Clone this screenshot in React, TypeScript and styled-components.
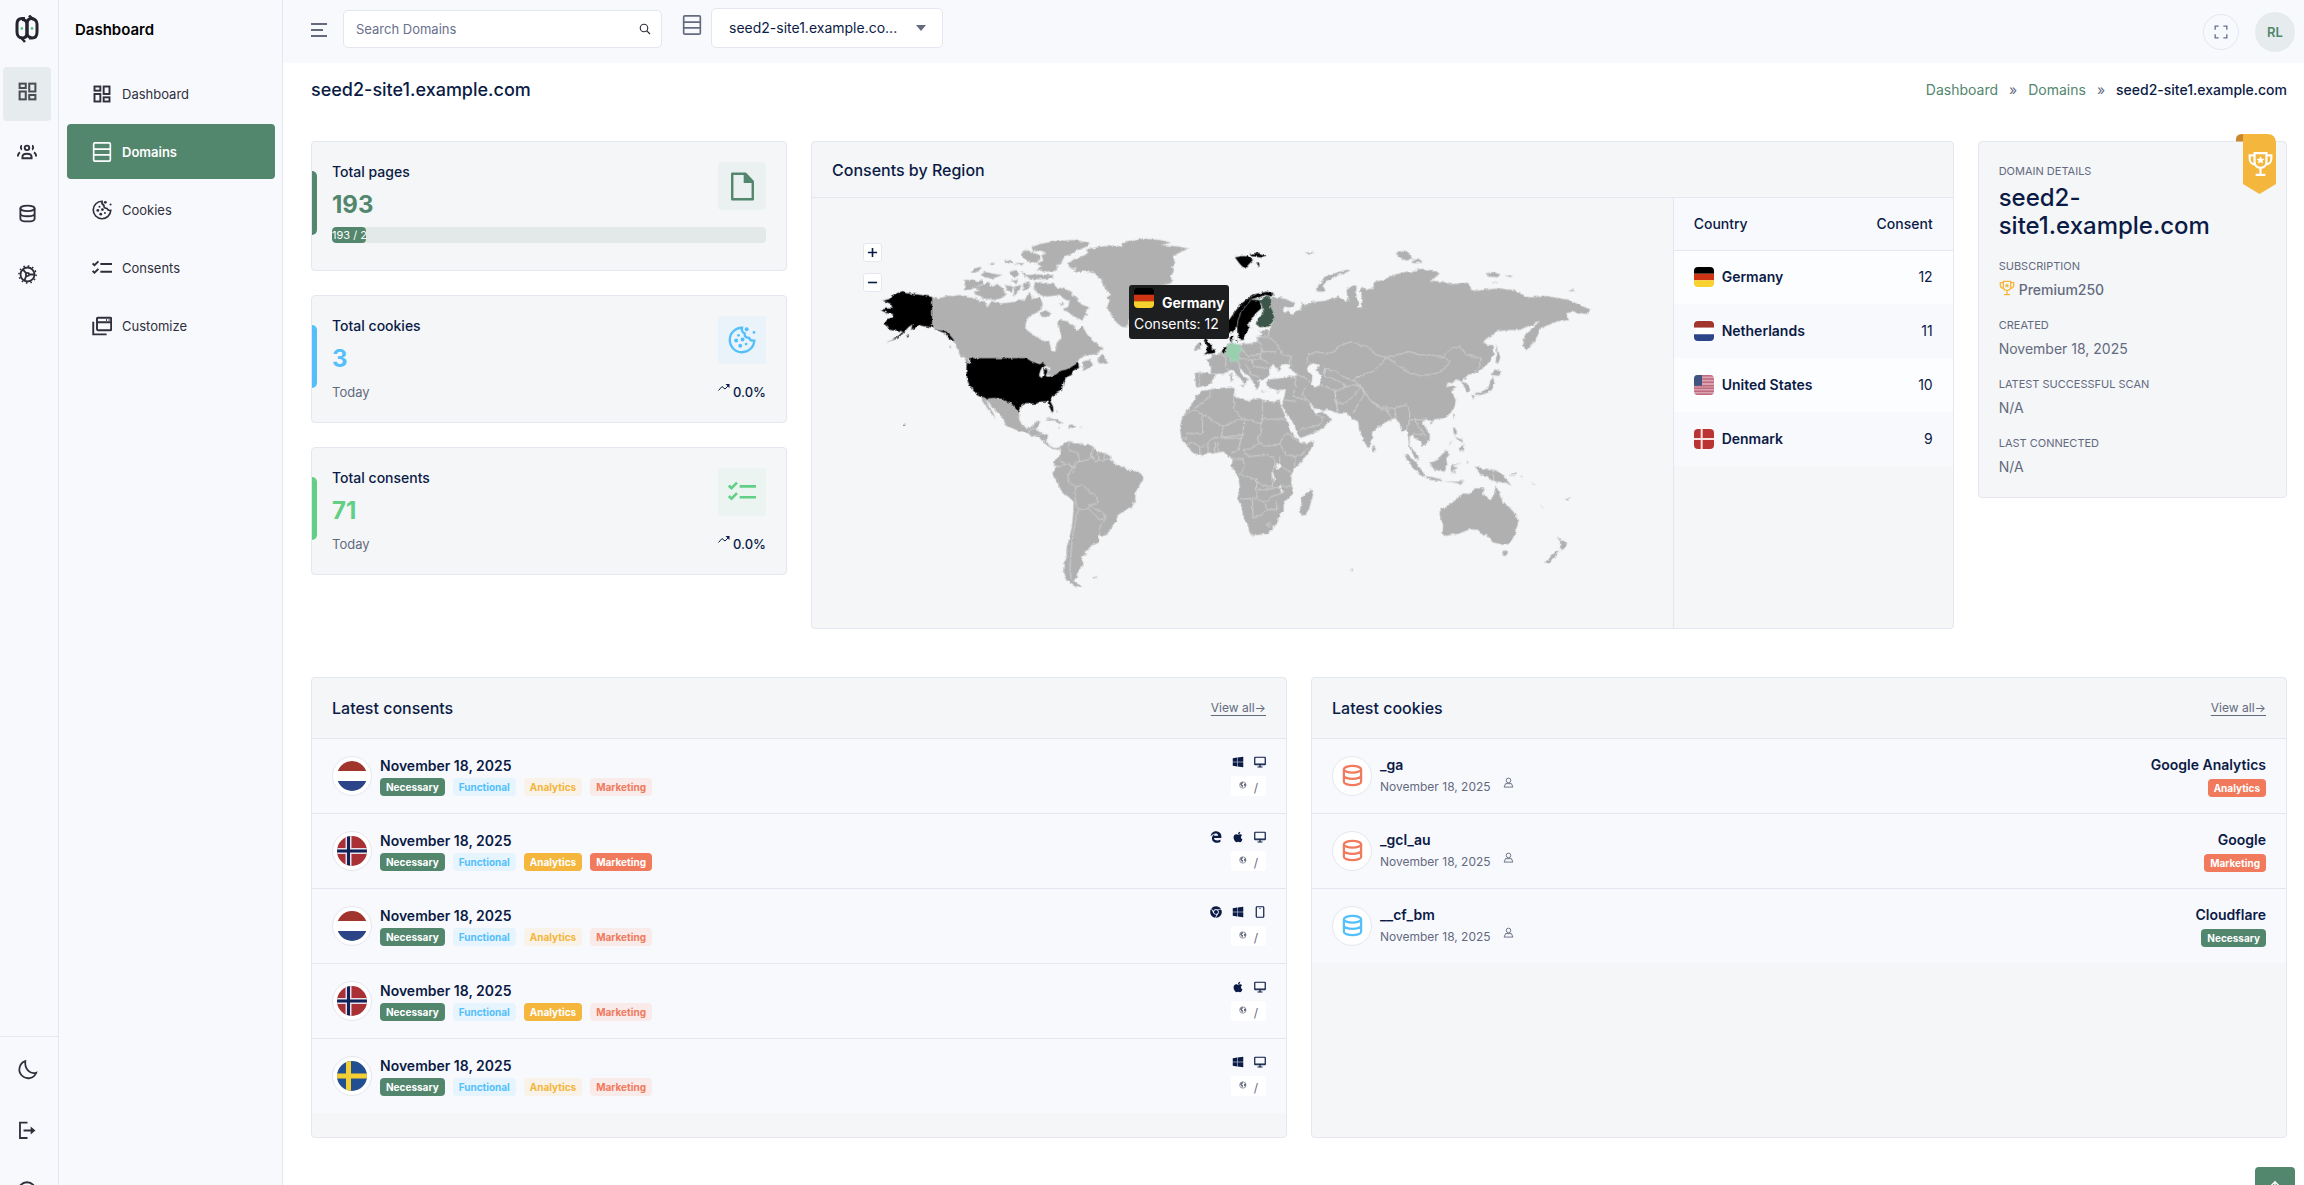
import React from "react";
import styled, { createGlobalStyle } from "styled-components";
import { FaWindows, FaApple, FaChrome } from "react-icons/fa";
import { FaEdgeLegacy } from "react-icons/fa6";

const c = {
  green: "#52866d",
  blue: "#53c0fb",
  mint: "#62cf85",
  amber: "#f4b63c",
  coral: "#f1795c",
  navy: "#0b1b45",
  muted: "#646a7e",
  ink: "#2f2f3b",
  line: "#e4e7ef",
  panel: "#f4f6f8",
  shell: "#f8f9fd",
};

const GlobalStyle = createGlobalStyle`
  *, *::before, *::after { box-sizing: border-box; }
  body { margin: 0; background: #fff; color: ${c.navy}; font-family: Inter, "Open Sans", sans-serif; font-size: 14px; line-height: 20px; }
  h1, h2, h3, p, ul, ol, dl, dd { margin: 0; padding: 0; }
  ul, ol { list-style: none; }
  svg { display: block; }
  button, input, select { font: inherit; color: inherit; }
  a { color: inherit; text-decoration: none; }
`;

/* ---------- icons ---------- */

type IconProps = { size?: number; color?: string };

const Line = ({ size = 20, color = "currentColor", w = 2.3, children }: IconProps & { w?: number; children: React.ReactNode }) => (
  <svg width={size} height={size} viewBox="0 0 24 24" fill="none" stroke={color} strokeWidth={w} aria-hidden="true">
    {children}
  </svg>
);

const GridIcon = (p: IconProps) => (
  <Line {...p}>
    <rect x="3" y="3" width="7" height="5" />
    <rect x="14" y="3" width="7" height="9" />
    <rect x="3" y="12" width="7" height="9" />
    <rect x="14" y="16" width="7" height="5" />
  </Line>
);
const RowsIcon = (p: IconProps) => (
  <Line {...p} w={2}>
    <rect x="2" y="1" width="20" height="22" rx="1.5" />
    <path d="M2 8.5h20M2 15.500h20" />
  </Line>
);
const CookieIcon = (p: IconProps) => (
  <Line {...p} w={2}>
    <path d="M12 1.500a10.500 10.500 0 1 0 10.500 11c-2 .3-3.800-.4-4.400-2.300-2.600 0-4.200-1.600-3.800-3.800-1.800-.6-2.600-2.600-2.300-4.900z" />
    <g fill="currentColor" stroke="none" color={p.color}>
      <circle cx="9" cy="8" r="1.200" /><circle cx="7" cy="12.500" r="1.700" /><circle cx="12.500" cy="11.500" r="1.700" />
      <circle cx="10.500" cy="17" r="1.700" /><circle cx="15.500" cy="15.500" r="1.200" />
      <circle cx="16" cy="2.800" r="1.700" /><circle cx="22.300" cy="5.500" r="1.200" />
    </g>
  </Line>
);
const ChecksIcon = (p: IconProps) => (
  <Line {...p}>
    <path d="M.7 6.500l2.300 2.200 4.700-4.700M.7 15.500l2.300 2.200 4.700-4.700M10 7.200h14M10 16.500h14" />
  </Line>
);
const WindowsIcon = (p: IconProps) => (
  <Line {...p}>
    <rect x="6" y="2" width="17" height="15" rx="1" />
    <path d="M6 7.500h17M1.500 7v15h16M17 4.800h1M20 4.800h1" />
  </Line>
);
const PeopleIcon = (p: IconProps) => (
  <Line {...p}>
    <circle cx="12" cy="7" r="2.700" />
    <path d="M6.500 19.500v-1.500c0-2.500 2.400-4 5.500-4s5.500 1.500 5.500 4v1.500zM1 17.500c0-2.500.8-4 2.600-5M23 17.500c0-2.500-.8-4-2.600-5M6 4.500c-1.800.2-2 3.800 0 4.500M18 4.500c1.800.2 2 3.800 0 4.500" />
  </Line>
);
const DatabaseIcon = (p: IconProps) => (
  <Line {...p}>
    <ellipse cx="12" cy="5.500" rx="9" ry="3.500" />
    <path d="M3 5.500v13c0 2 4 3.500 9 3.500s9-1.500 9-3.500v-13M3 12c0 2 4 3.500 9 3.500s9-1.500 9-3.500" />
  </Line>
);
const GearIcon = (p: IconProps) => (
  <Line {...p}>
    <circle cx="12" cy="12" r="8.800" />
    <circle cx="12" cy="12" r="10.800" strokeWidth="2" strokeDasharray="2 3.650" />
    <circle cx="12" cy="12" r="2" />
    <path d="M10.500 10.500L6 5.500M14 12h7M10.500 13.500L8 20" />
  </Line>
);
const MoonIcon = (p: IconProps) => (
  <Line {...p} w={2}>
    <path d="M9.500 2.500a10 10 0 1 0 12.500 13.200c-7 2.200-13.500-4-12.500-13.200z" />
  </Line>
);
const LogoutIcon = (p: IconProps) => (
  <Line {...p}>
    <path d="M12 2H2.500v19.500H12M7 12h10" />
    <path d="M16 7l6 5-6 5z" fill="currentColor" stroke="none" />
  </Line>
);
const AccountIcon = (p: IconProps) => (
  <Line {...p}>
    <circle cx="12" cy="12" r="10.500" /><circle cx="12" cy="9.500" r="3.500" /><path d="M5 19c3-4 11-4 14 0" />
  </Line>
);
const SearchIcon = (p: IconProps) => (
  <Line {...p}><circle cx="10" cy="10" r="7.500" /><path d="M15.500 15.500L22 22" /></Line>
);
const ExpandIcon = (p: IconProps) => (
  <Line {...p}><path d="M2 8V2h6M16 2h6v6M22 16v6h-6M8 22H2v-6" /></Line>
);
const FileIcon = (p: IconProps) => (
  <Line {...p} w={2}>
    <path d="M3.500 1.500h11L20.500 8v14.500h-17z" strokeLinejoin="round" />
    <path d="M13 1l8 8h-8z" fill={p.color} stroke="none" />
  </Line>
);
const TrophyIcon = (p: IconProps) => (
  <Line {...p} w={2}>
    <path d="M6.500 2h11v8c0 3.500-2.500 5.500-5.500 5.500S6.500 13.500 6.500 10zM6.500 4H2v3c0 3 2 5.500 5.200 5.500M17.500 4H22v3c0 3-2 5.500-5.200 5.500M12 15.500V22M7.500 22h9" />
    <path d="M12 4.800l1.200 2.300 2.500.3-1.900 1.700.5 2.500-2.300-1.300-2.300 1.300.5-2.500-1.900-1.700 2.500-.3z" fill={p.color ?? "currentColor"} stroke="none" />
  </Line>
);
const TrendIcon = (p: IconProps) => (
  <Line {...p} w={2}><path d="M1 17l7-8 6 5 8-8" /><path d="M15 4h8v8z" fill="currentColor" stroke="none" /></Line>
);
const DesktopIcon = (p: IconProps) => (
  <Line {...p} w={2.400}><rect x="1.500" y="2.500" width="21" height="15" rx="1" /><path d="M12 17v4M7 22h10M2 16h20" /></Line>
);
const PhoneIcon = (p: IconProps) => (
  <Line {...p} w={2.400}><rect x="4.500" y="1.500" width="15" height="21" rx="1.500" /><path d="M11 5h2" /></Line>
);
const GlobeIcon = (p: IconProps) => (
  <Line {...p} w={2}>
    <circle cx="12" cy="12" r="10" />
    <path d="M3 9l4-5 6-1-1 4-3 2 1 3 3 1-1 4-2 4-2-5-3-4zM16 8l5-1 1 5-2 5-3-1-2-4z" fill="currentColor" stroke="none" />
  </Line>
);
const PersonIcon = (p: IconProps) => (
  <Line {...p} w={2}><circle cx="12" cy="7.500" r="5" /><path d="M2.500 22l3-7.500h13l3 7.500z" /></Line>
);
const Logo = () => (
  <svg width="24" height="28" viewBox="0 0 24 28" fill="none" stroke="#25252d" strokeWidth="3" aria-hidden="true">
    <path d="M10 3.500H7C3.500 3.500 2 6 2 9v8c0 3.500 2 6 5.500 6s4.500-2.500 4.500-6V9c0-3.500 1.500-5.500 4.500-5.500S22 6 22 9v8c0 3.500-1.500 6-5 6h-3" />
    <path d="M7 4.500c3.500 0 5 2 5 5v8c0 3 1.500 5 4.500 5" />
    <path d="M14 .5l5 4.500M5.500 22l4.500 5" strokeWidth="2.500" />
    <circle cx="6.800" cy="13.500" r="1.400" fill="#5fc48a" stroke="none" /><circle cx="17" cy="13.500" r="1.400" fill="#5fc48a" stroke="none" />
  </svg>
);

/* ---------- flags ---------- */

type FlagCode = "de" | "nl" | "us" | "dk" | "no" | "se";
const FlagArt: Record<FlagCode, React.ReactNode> = {
  de: <><path fill="#000" d="M0 0h30v10H0z" /><path fill="#cf3512" d="M0 10h30v10H0z" /><path fill="#f8d12e" d="M0 20h30v10H0z" /></>,
  nl: <><path fill="#a1342b" d="M0 0h30v10H0z" /><path fill="#fff" d="M0 10h30v10H0z" /><path fill="#2c4589" d="M0 20h30v10H0z" /></>,
  us: <><path fill="#dba3b0" d="M0 0h30v30H0z" /><path stroke="#c06a80" strokeWidth="2.300" d="M0 1h30M0 6h30M0 11h30M0 16h30M0 20h30M0 24.500h30M0 29h30" /><path fill="#3f5480" d="M0 0h12v16H0z" /></>,
  dk: <><path fill="#b93432" d="M0 0h30v30H0z" /><path stroke="#fbe4e4" strokeWidth="3" d="M11.500 0v30M0 15h30" /></>,
  no: <><path fill="#a93034" d="M0 0h30v30H0z" /><path stroke="#e9dfe8" strokeWidth="6" d="M11.500 0v30M0 15h30" /><path stroke="#102257" strokeWidth="3" d="M11.500 0v30M0 15h30" /></>,
  se: <><path fill="#224f92" d="M0 0h30v30H0z" /><path stroke="#f3cf33" strokeWidth="5" d="M11.500 0v30M0 15h30" /></>,
};
const FlagSvg = styled.svg<{ $round?: boolean }>`
  flex: none;
  border-radius: ${(p) => (p.$round ? "50%" : "4px")};
`;
const Flag = ({ code, size = 20, round }: { code: FlagCode; size?: number; round?: boolean }) => (
  <FlagSvg $round={round} width={size} height={size} viewBox="0 0 30 30" aria-hidden="true">{FlagArt[code]}</FlagSvg>
);

/* ---------- shell ---------- */

const Shell = styled.div`
  display: grid;
  grid-template-columns: 59px 224px minmax(0, 1fr);
  height: 100vh;
  overflow: hidden;
`;
const Rail = styled.nav`
  display: flex;
  flex-direction: column;
  min-height: 0;
  background: ${c.shell};
  border-right: 1px solid ${c.line};
  color: ${c.ink};
`;
const LogoLink = styled.a`
  display: flex;
  justify-content: center;
  padding: 15px 5px 24px 0;
`;
const RailList = styled.div`
  display: flex;
  flex-direction: column;
  gap: 7px;
  padding: 0 3px;
`;
const RailButton = styled.button<{ $active?: boolean }>`
  display: flex;
  flex: none;
  align-items: center;
  justify-content: center;
  width: 48px;
  height: 54px;
  padding: 0 0 6px;
  border: 0;
  border-radius: 4px;
  color: ${(p) => (p.$active ? "#4b4b52" : "inherit")};
  background: ${(p) => (p.$active ? "#e6ecee" : "transparent")};
`;
const RailFoot = styled(RailList)`
  flex: none;
  height: 149px;
  margin-top: auto;
  padding-top: 8px;
  border-top: 1px solid ${c.line};
  overflow: hidden;
`;
const Menu = styled.nav`
  display: flex;
  flex-direction: column;
  background: ${c.shell};
  border-right: 1px solid ${c.line};
`;
const MenuTitle = styled.h2`
  padding: 20px 16px 26px;
  font-size: 15px;
  font-weight: 600;
  color: #000;
`;
const MenuList = styled.ul`
  display: grid;
  gap: 3px;
  padding: 0 7px 0 8px;
`;
const MenuLink = styled.a<{ $active?: boolean }>`
  display: flex;
  align-items: center;
  gap: 10px;
  height: 55px;
  padding: 0 25px;
  border-radius: 4px;
  color: ${(p) => (p.$active ? "#fff" : c.ink)};
  background: ${(p) => (p.$active ? c.green : "transparent")};
  font-weight: ${(p) => (p.$active ? 600 : 400)};
  font-size: 13px;
`;
const Main = styled.main`
  min-width: 0;
`;
const TopBar = styled.header`
  display: flex;
  align-items: center;
  height: 63px;
  padding: 0 9px 0 28px;
  background: ${c.shell};
`;
const Burger = styled.button`
  display: grid;
  gap: 4px;
  width: 16px;
  margin: 0 16px 4px 0;
  padding: 0;
  border: 0;
  background: none;
`;
const BurgerBar = styled.span<{ $short?: boolean }>`
  width: ${(p) => (p.$short ? "12px" : "16px")};
  height: 2px;
  background: ${c.muted};
`;
const SearchBox = styled.label`
  display: flex;
  align-items: center;
  width: 319px;
  height: 38px;
  margin: 0 20px 5px 0;
  padding: 0 10px 0 12px;
  background: #fff;
  border: 1px solid ${c.line};
  border-radius: 5px;
  color: ${c.ink};
`;
const SearchInput = styled.input`
  flex: 1;
  min-width: 0;
  padding: 0;
  border: 0;
  outline: 0;
  background: none;
  font-size: 13px;
  &::placeholder { color: #68708c; opacity: 1; }
`;
const DomainIcon = styled.span`
  margin: 0 9px 13px 0;
  color: ${c.muted};
`;
const SelectBox = styled.label`
  display: flex;
  align-items: center;
  width: 232px;
  height: 40px;
  margin-bottom: 7px;
  padding-right: 16px;
  background: #fff;
  border: 1px solid ${c.line};
  border-radius: 5px;
`;
const Select = styled.select`
  flex: 1;
  min-width: 0;
  padding: 0 0 0 17px;
  margin-right: 15px;
  border: 0;
  outline: 0;
  appearance: none;
  background: none;
  font-size: 14px;
  text-overflow: ellipsis;
`;
const Caret = styled.span`
  border: 5px solid transparent;
  border-top: 6px solid ${c.muted};
  border-bottom: 0;
`;
const RoundButton = styled.button`
  display: grid;
  place-items: center;
  width: 36px;
  height: 36px;
  margin: 0 16px 0 auto;
  padding: 0;
  border: 1px solid ${c.line};
  border-radius: 50%;
  background: none;
  color: #68708c;
`;
const Avatar = styled.button`
  width: 40px;
  height: 40px;
  padding: 0;
  border: 0;
  border-radius: 50%;
  background: #e6ecee;
  color: ${c.green};
  font-size: 13px;
  font-weight: 600;
`;

const Content = styled.div`
  padding: 15px 17px 0 28px;
`;
const PageHead = styled.div`
  display: flex;
  justify-content: space-between;
  align-items: center;
  margin-bottom: 39px;
`;
const PageTitle = styled.h1`
  font-size: 18px;
  line-height: 24px;
  font-weight: 500;
`;
const Crumbs = styled.ol`
  display: flex;
  gap: 11px;
  color: ${c.muted};
`;
const CrumbLink = styled.a`
  color: ${c.green};
`;
const CrumbHere = styled.span`
  color: ${c.navy};
  font-weight: 500;
`;
const Grid = styled.div`
  display: grid;
  grid-template-columns: repeat(12, minmax(0, 1fr));
  gap: 48px 24px;
`;
const Col = styled.div<{ $span: number }>`
  grid-column: span ${(p) => p.$span};
  display: flex;
  flex-direction: column;
  gap: 24px;
`;
const Card = styled.section`
  position: relative;
  background: ${c.panel};
  border: 1px solid ${c.line};
  border-radius: 4px;
`;

/* ---------- stat cards ---------- */

const StatCard = styled(Card)`
  padding: 20px;
`;
const Accent = styled.span<{ $color: string }>`
  position: absolute;
  left: 0;
  top: 23%;
  width: 5px;
  height: 50%;
  border-radius: 0 5px 5px 0;
  background: ${(p) => p.$color};
`;
const StatTop = styled.div`
  display: flex;
  justify-content: space-between;
  align-items: flex-start;
  height: 58px;
`;
const StatTitle = styled.h3`
  margin-bottom: 8px;
  font-size: 14px;
  font-weight: 500;
`;
const StatValue = styled.p<{ $color: string }>`
  font-size: 24px;
  line-height: 30px;
  font-weight: 700;
  color: ${(p) => p.$color};
`;
const StatIcon = styled.span<{ $bg: string; $color: string }>`
  display: grid;
  place-items: center;
  width: 48px;
  height: 48px;
  border-radius: 4px;
  background: ${(p) => p.$bg};
  color: ${(p) => p.$color};
`;
const StatFoot = styled.div`
  display: flex;
  justify-content: space-between;
  margin-top: 8px;
  font-size: 13px;
  color: ${c.muted};
`;
const Delta = styled.span`
  display: flex;
  gap: 3px;
  font-weight: 500;
  color: ${c.navy};
`;
const Track = styled.div`
  height: 16px;
  margin: 7px 0;
  border-radius: 4px;
  background: #e3e9e8;
  overflow: hidden;
`;
const Fill = styled.div`
  height: 100%;
  border-radius: 4px;
  background: ${c.green};
  color: #fff;
  font-size: 11px;
  line-height: 16px;
  white-space: nowrap;
  overflow: hidden;
`;

/* ---------- region card ---------- */

const CardHead = styled.div<{ $tall?: boolean }>`
  display: flex;
  justify-content: space-between;
  align-items: center;
  height: ${(p) => (p.$tall ? "61px" : "56px")};
  padding: 0 20px;
  border-bottom: 1px solid ${c.line};
`;
const CardTitle = styled.h2`
  font-size: 16px;
  font-weight: 500;
`;
const RegionBody = styled.div`
  display: grid;
  grid-template-columns: minmax(0, 1fr) 280px;
`;
const MapPane = styled.div`
  position: relative;
`;
const MapSvg = styled.svg`
  width: 100%;
  height: auto;
`;
const ZoomStack = styled.div`
  position: absolute;
  left: 51px;
  top: 45px;
  display: grid;
  gap: 11px;
`;
const ZoomButton = styled.button`
  display: grid;
  place-items: center;
  width: 19px;
  height: 19px;
  padding: 0;
  border: 1px solid ${c.line};
  border-radius: 3px;
  background: #fff;
  color: ${c.navy};
`;
const Tooltip = styled.div`
  position: absolute;
  left: 317px;
  top: 87px;
  width: 100px;
  height: 54px;
  padding: 3px 5px;
  border-radius: 3px;
  background: #1c1e20;
  color: #fff;
  font-size: 14px;
`;
const TooltipName = styled.div`
  display: flex;
  gap: 8px;
  height: 26px;
  font-weight: 700;
  line-height: 30px;
`;
const CountryPane = styled.div`
  border-left: 1px solid ${c.line};
`;
const CountryTable = styled.table`
  width: 100%;
  border-collapse: collapse;
`;
const Th = styled.th`
  height: 52px;
  padding: 0 20px;
  background: ${c.shell};
  border-bottom: 1px solid ${c.line};
  font-weight: 500;
  text-align: left;
  &:last-child { text-align: right; }
`;
const Td = styled.td`
  height: 54px;
  padding: 0 20px;
  &:last-child { text-align: right; }
`;
const Tr = styled.tr`
  background: #fcfdff;
  &:nth-child(even) { background: ${c.shell}; }
`;
const CountryName = styled.span`
  display: flex;
  align-items: center;
  gap: 8px;
  font-weight: 600;
`;

/* ---------- details card ---------- */

const DetailCard = styled(Card)`
  padding: 19px 20px 20px;
`;
const Ribbon = styled.svg`
  position: absolute;
  right: 10px;
  top: -8px;
`;
const DetailLabel = styled.dt`
  font-size: 11px;
  color: ${c.muted};
`;
const DetailName = styled.dd`
  max-width: 220px;
  margin: 3px 0 16px;
  font-size: 24px;
  line-height: 28px;
  font-weight: 500;
`;
const DetailValue = styled.dd<{ $strong?: boolean }>`
  display: flex;
  gap: 4px;
  margin: 4px 0 15px;
  color: ${c.muted};
  font-weight: ${(p) => (p.$strong ? 500 : 400)};
  &:last-child { margin-bottom: 0; }
`;

/* ---------- lists ---------- */

const ListCard = styled(Card)`
  flex: 1;
  padding-bottom: 24px;
`;
const ViewAll = styled.a`
  font-size: 12px;
  color: ${c.muted};
  text-decoration: underline;
  text-underline-offset: 3px;
`;
const Row = styled.li`
  display: flex;
  align-items: center;
  height: 75px;
  padding: 0 20px;
  background: ${c.shell};
  border-bottom: 1px solid ${c.line};
  &:last-child { height: 74px; border-bottom: 0; }
`;
const Disc = styled.span`
  display: grid;
  place-items: center;
  width: 40px;
  height: 40px;
  margin-right: 8px;
  border: 1px solid ${c.line};
  border-radius: 50%;
  background: #fff;
`;
const RowText = styled.div`
  display: grid;
  gap: 2px;
`;
const RowTitle = styled.p`
  font-size: 14px;
  font-weight: 600;
`;
const RowMeta = styled.p`
  display: flex;
  gap: 12px;
  font-size: 12px;
  color: ${c.muted};
`;
const RowEnd = styled.div`
  display: grid;
  justify-items: end;
  gap: 4px;
  margin-left: auto;
`;
const Badges = styled.div`
  display: flex;
  gap: 8px;
`;
const Badge = styled.span<{ $fg: string; $bg: string }>`
  padding: 0 6px;
  border-radius: 4px;
  font-size: 10px;
  line-height: 18px;
  font-weight: 700;
  color: ${(p) => p.$fg};
  background: ${(p) => p.$bg};
`;
const Devices = styled.div`
  display: flex;
  gap: 10px;
  padding-bottom: 4px;
`;
const PathTag = styled.span`
  display: flex;
  gap: 7px;
  width: 35px;
  height: 20px;
  padding: 4px 8px;
  border-radius: 3px;
  background: #fff;
  color: ${c.muted};
  font-size: 12px;
  line-height: 15px;
`;
const ToTop = styled.button`
  position: fixed;
  right: 9px;
  bottom: -22px;
  display: grid;
  place-items: center;
  width: 40px;
  height: 40px;
  padding: 0;
  border: 0;
  border-radius: 4px;
  background: ${c.green};
  color: #fff;
`;

/* ---------- world map ---------- */

const landWest = [
  "M217,231L235,237 262,227 280,228 300,225 325,232 345,234 360,240 355,246 375,243 382,262 395,243 420,250 440,249 460,246 478,238 495,243 500,226 512,215 520,236 540,232 548,250 545,268 520,283 500,300 496,325 520,345 548,362 568,366 575,392 586,395 590,370 604,352 600,330 592,308 600,300 625,304 640,318 655,332 668,318 680,340 695,360 712,370 728,388 712,402 690,406 668,410 655,420 655,428 638,440 620,448 600,452 590,462 575,466 562,465 565,452 572,448 556,436 540,430 520,425 500,414 330,414 325,425 310,412 298,400 290,385 284,365 270,345 258,333 240,328 217,320Z",
  "M665,425L690,420 700,435 680,448 668,452 672,440ZM712,425L725,400 735,412 745,428 738,432ZM295,402L308,405 328,425 318,422ZM266,374L274,378 272,388Z",
  "M316,180L340,178 350,185 365,180 372,190 352,200 335,208 318,212 312,208ZM345,203L370,193 385,185 398,200 412,192 430,205 438,225 425,235 400,240 370,235 360,228 348,225 342,215 360,212Z",
  "M332,158L345,145 362,140 365,148 345,158ZM362,165L375,155 395,160 415,163 428,165 400,175 375,172ZM450,155L470,150 478,165 465,172 450,165ZM485,152L500,165 530,163 580,165 578,175 540,178 510,176 490,168ZM388,130L402,128 398,136ZM433,118L460,126 455,132 438,128ZM462,130L490,128 485,136Z",
  "M515,82L540,72 580,64 640,60 690,68 680,80 650,92 630,105 615,108 605,128 590,140 592,152 560,155 530,150 545,140 530,130 550,122 545,108 560,100 540,92 520,95ZM485,98L505,90 520,98 540,105 541,120 520,130 500,120 488,112Z",
  "M435,195L460,200 455,218 440,210ZM462,200L485,195 478,212 462,230ZM490,190L505,182 512,195 500,210 488,212ZM452,182L475,180 470,190ZM540,280L555,270 575,280 560,292 545,290ZM600,250L610,246 612,256Z",
  "M525,190L545,185 560,192 580,190 590,202 610,205 628,212 640,225 655,238 660,252 690,262 675,275 685,285 672,290 668,302 655,295 640,290 630,280 618,272 608,268 625,260 628,245 610,235 600,225 580,228 560,230 540,225 528,215 520,205Z",
  "M625,130L640,120 670,108 685,98 678,88 720,80 760,76 790,80 785,70 850,55 900,60 935,68 905,75 960,80 988,86 965,95 940,108 945,125 938,140 942,155 930,168 940,180 930,190 900,198 870,215 840,240 820,270 810,300 800,322 785,320 770,308 755,285 740,262 750,240 738,232 752,222 738,212 725,180 705,160 680,155 640,155 650,145 628,145Z",
  "M362,530L400,535 430,538 445,548 458,553 468,568 478,575 478,600 490,620 505,625 520,618 525,608 542,604 535,618 528,630 548,640 565,645 560,665 575,682 590,685 600,680 596,690 575,686 560,675 545,662 540,655 510,645 480,634 455,625 435,612 432,600 415,580 395,562 380,540 385,558 398,575 407,594 395,582 380,562 368,545Z",
  "M555,598L570,594 590,600 612,610 600,612 580,602ZM625,618L635,613 650,620 640,624 628,622ZM596,621L604,623 598,626ZM660,620L667,622 661,625ZM590,570L594,578 590,582Z",
  "M600,680L615,668 632,663 640,670 655,670 670,675 685,672 700,680 715,695 735,700 750,708 760,725 770,735 790,742 815,752 835,755 850,768 850,780 840,795 828,815 826,840 815,865 795,872 775,885 768,905 755,925 740,945 725,950 712,945 718,962 710,972 688,978 690,990 672,995 680,1002 668,1010 665,1025 672,1035 660,1048 650,1065 655,1072 640,1080 650,1090 668,1100 650,1103 630,1090 615,1075 610,1055 612,1030 620,1015 620,985 628,955 636,920 640,880 641,845 625,830 608,820 598,800 580,768 578,758 590,740 582,735 585,720 598,710 600,695Z",
  "M697,1073L712,1069 708,1076Z",
];
const landEast = [
  "M65,513L85,510 110,505 140,502 160,500 165,510 162,520 170,532 190,538 210,545 222,535 240,535 255,542 280,545 300,542 305,560 318,590 325,605 335,640 355,658 365,670 385,668 403,662 400,675 385,700 365,725 345,745 335,765 335,790 342,820 325,835 312,850 312,875 298,885 295,905 280,925 265,940 240,945 215,947 208,935 205,915 190,890 185,860 172,835 180,800 175,770 165,755 155,740 158,720 145,705 130,695 105,700 85,702 50,706 35,695 20,675 5,660 2,640 0,625 5,600 15,580 35,555 45,535Z",
  "M395,808L400,825 390,860 380,885 365,887 360,870 365,850 362,835 375,825Z",
  "M78,420L92,415 98,405 115,403 125,395 138,385 142,372 152,368 165,372 190,372 215,370 235,365 228,350 245,345 240,332 268,330 285,298 272,258 275,232 300,232 325,240 345,250 340,262 322,262 310,265 312,280 325,272 340,285 345,275 365,268 365,245 375,258 400,245 430,243 450,238 475,230 490,240 505,245 500,210 520,195 530,198 530,235 540,250 530,262 545,262 548,240 540,215 550,200 555,210 580,205 585,185 610,180 640,165 680,155 710,155 715,142 730,150 760,150 780,160 770,170 750,182 790,185 810,192 845,190 865,188 875,210 895,212 920,208 960,205 1000,210 1030,225 1050,232 1100,228 1140,235 1170,240 1200,255 1232,268 1225,282 1205,280 1180,275 1160,280 1168,300 1130,305 1100,318 1080,325 1075,345 1060,370 1040,395 1030,375 1035,345 1060,325 1080,302 1060,315 1045,318 1020,330 980,330 950,335 925,355 910,368 925,375 942,375 942,400 930,425 910,445 890,458 865,465 855,475 845,485 862,490 872,510 860,518 855,500 848,492 840,482 828,478 818,490 805,488 800,500 820,498 832,502 815,512 828,540 825,560 812,580 790,595 765,598 755,605 740,598 730,605 735,620 750,640 750,660 730,680 722,665 705,655 700,645 690,650 690,675 700,690 715,705 718,722 705,715 698,700 688,680 685,650 680,630 665,635 660,610 645,595 620,605 600,620 578,635 575,670 565,685 550,660 538,630 535,605 515,595 500,578 470,578 445,570 430,572 405,565 390,548 388,550 400,570 410,580 430,575 455,597 445,612 420,630 400,640 360,655 355,640 340,610 320,580 305,555 312,535 318,508 300,510 280,508 262,500 260,485 270,478 300,475 330,470 345,472 352,465 335,448 325,445 335,435 315,432 300,440 305,448 295,455 280,432 275,440 268,455 270,465 258,475 245,478 235,480 240,495 232,510 220,490 210,470 195,460 180,445 178,452 190,468 210,480 200,482 198,495 190,485 175,472 165,455 150,452 130,462 110,462 95,485 80,500 62,502 48,500 45,458 70,458 92,460 94,440Z",
  "M45,380L55,370 65,375 60,388 45,392ZM152,462L158,460 157,485 152,485ZM178,497L195,495 192,502ZM240,512L258,514 250,517ZM290,516L302,513 297,519Z",
  "M408,208L420,190 435,170 470,157 508,148 508,154 470,168 445,180 430,195 438,215 415,215ZM648,100L670,90 690,100 698,118 680,122 660,112ZM698,122L720,115 728,128 700,130ZM918,160L940,156 962,162 955,172 925,170ZM975,166L995,166 995,172ZM938,186L955,187 945,190ZM1166,214L1178,209 1186,213ZM376,98L405,96 388,104Z",
  "M948,372L955,390 962,412 955,432 948,425 952,400ZM935,465L945,448 965,455 955,468ZM940,470L945,490 935,512 915,522 890,528 885,520 905,515 925,505 932,485ZM875,525L885,528 880,540Z",
  "M820,580L826,585 822,598ZM750,608L760,606 755,618ZM578,678L588,685 585,697 577,693ZM820,622L830,625 832,645 822,645ZM825,650L838,656 848,660 850,668 836,662ZM838,685L855,672 852,695 840,692ZM805,675L818,662 812,672Z",
  "M672,702L690,708 715,735 735,765 725,768 700,745 685,722ZM735,768L760,772 785,778 788,784 750,780ZM752,728L770,722 785,705 800,692 808,702 800,715 803,735 795,755 765,750 752,740ZM812,738L845,727 822,738 835,745 822,748 832,762 824,760 818,750 815,764ZM862,722L866,728 862,732ZM795,785L830,785 855,783 840,792 820,788Z",
  "M885,740L900,740 905,752 920,746 945,750 970,765 978,780 998,795 975,788 950,785 930,780 925,770 900,762 892,750ZM988,768L1012,756 1008,765ZM1020,765L1030,772 1026,772ZM1055,785L1068,795 1060,792ZM1082,856L1095,866 1090,864ZM1158,838L1175,832 1164,842Z",
  "M780,870L805,858 825,842 850,820 870,822 885,805 915,805 908,820 930,838 942,828 948,798 958,815 965,840 985,858 1010,885 1015,910 1005,945 990,972 970,975 940,968 925,950 920,942 912,948 895,930 870,928 840,940 800,948 788,942 790,915 780,890ZM965,992L985,992 982,1008 972,1008Z",
  "M1132,950L1145,960 1163,970 1150,990 1140,988 1145,970ZM1138,992L1125,1012 1110,1030 1095,1028 1110,1012 1128,995ZM510,1050L520,1050 518,1055Z",
];
const blackWest =
  "M60,270L80,265 98,265 92,252 68,242 88,237 97,226 112,219 128,213 140,219 160,222 180,224 217,231 217,320 228,325 240,330 258,333 270,345 284,362 278,364 264,352 256,340 240,334 222,324 200,320 185,318 175,314 165,325 152,330 158,314 145,322 135,334 125,345 110,356 78,370 100,358 118,345 128,335 115,332 100,332 90,330 82,318 72,310 80,297 98,293 98,282 82,280Z M330,414L500,414 515,424 540,432 548,428 560,438 548,440 540,455 538,468 546,474 552,460 550,445 560,445 563,455 558,468 568,470 590,462 600,452 620,448 635,440 648,432 655,428 658,444 640,452 636,465 620,472 612,485 608,500 606,512 590,520 575,535 572,545 580,560 581,575 576,577 568,560 562,545 545,545 525,552 500,550 485,558 478,575 468,568 455,552 440,545 430,538 400,535 385,536 362,530 345,518 330,500 322,480 319,455 320,425 318,420 330,430Z M130,612h5v5h-5z M138,346L148,342 145,350Z";
const blackEast = [
  "M75,356L88,368 98,375 95,385 107,390 105,400 85,402 70,405 82,395 78,388 85,382 78,372 72,362ZM57,368L65,370 62,376ZM125,397L130,382 142,380 138,397Z",
  "M150,352L160,346 162,355 155,367 150,362ZM166,358L173,358 170,366Z",
  "M120,330L147,300 165,275 185,250 205,235 225,222 262,215 282,220 275,230 255,225 240,232 215,238 200,255 185,275 175,300 172,320 160,335 147,340Z",
  "M215,238L240,240 245,265 228,280 215,300 205,310 210,325 195,345 192,360 180,360 172,340 172,320 175,300 185,275 200,255Z",
  "M165,112L185,108 205,108 220,120 210,130 195,147 180,132ZM208,102L235,98 260,105 245,113 220,110ZM228,130L240,130 238,138Z",
];
const bordersWest =
  "M632,663L625,680 632,692 655,700 658,725 645,730 640,760M582,738L605,740 615,730 640,740 625,765 625,785 640,795 648,800 668,795 690,815 710,830 715,850 690,855 685,865 660,870 650,860 645,830 648,800M600,722L615,730M655,868L648,900 640,940 635,980 632,1020 630,1050 635,1080M690,855L705,868 720,870 735,885 735,895 720,900 700,880 688,868M738,895L725,915 718,930 720,945M700,680L695,705 700,720M715,697L718,722M735,702L732,720M658,725L680,722 700,710 705,725 740,718 755,715M505,643L512,628 530,625M520,648L548,642M548,664L560,664";
const bordersEast =
  "M92,513L90,530 70,545 50,560 45,570M45,570L20,580 3,600M45,570L130,620 185,595 165,570 160,535 162,520M68,582L68,640 20,640M130,620L125,650 100,655 85,665 70,680M192,600L190,645 125,652M125,655L185,655 190,645M185,595L245,612 242,640 232,655 240,670 215,685 190,690M248,540L248,598 318,598M248,598L245,612M240,670L260,678 300,672 310,650 325,640 355,665M300,672L320,705 345,710 365,705 385,685M345,710L345,740M300,710L300,735 335,760M190,690L205,710 260,705 285,715 285,740 275,760 280,800 240,795 230,780 205,770 180,765M230,780L232,835 180,838M235,810L270,808 300,800 305,820 275,830 262,845 235,840M305,800L340,798M218,840L220,895 245,885 265,870 250,845M265,870L295,868 290,840M262,912L270,908 276,915 266,921ZM185,655L175,690 155,700M160,718L190,718 195,740 178,765M85,668L85,700M105,665L105,700M115,665L115,698M60,680L60,704M20,672L40,668 60,680 70,680M5,655L20,655 20,640"
  + "M380,430L385,405 410,395 440,402 465,395 475,380 515,365 540,375 565,380 590,405 620,412 605,430 580,455 545,465 515,480 490,470 470,455 435,445 430,460M620,412L650,405 690,395 720,405 755,405 790,410 812,425 795,445 770,460 730,468 690,460 660,440 640,425 620,412M790,410L815,385 840,380 860,405 905,415 900,440 885,455M545,465L520,480 545,500 570,540 600,560 640,565 680,555 690,575 690,600 720,600 740,598M545,500L555,520 540,545 520,580M575,545L600,565 630,572M465,515L500,500 530,495 545,500 520,530 495,550 470,550 465,515M380,500L365,520 390,548M420,495L465,510 470,550 475,575M435,445L435,470 470,480 500,500M345,508L340,530 380,540M315,540L350,545M360,630L400,620 420,615 430,590 405,585M690,600L680,630M645,565L650,600M705,600L720,625 740,650M700,640L730,645M620,570L635,595M268,330L265,350 290,370 305,400 335,410 330,435M235,365L245,372 245,395 290,395M245,395L240,415 270,430M188,392L210,410 240,402M180,415L215,420 240,415M215,420L220,440 265,445M175,424L180,445M120,400L138,412 138,440 150,452M195,430L205,445 215,465 240,470M92,460L112,464M58,460L58,498M352,465L380,475M345,472L350,505M228,350L262,352M942,752L942,784M372,470L395,490";

const Land = ({ d, fill }: { d: string; fill: string }) => <path d={d} fill={fill} stroke="#dfe1e3" strokeWidth="1" />;

const WorldMap = () => (
  <MapSvg viewBox="-144 -66 2583 1290" role="img" aria-label="World map of consents">
    <defs>
      <filter id="coast" filterUnits="userSpaceOnUse" x="-144" y="-66" width="2583" height="1290" colorInterpolationFilters="sRGB">
        <feTurbulence type="fractalNoise" baseFrequency="0.08" numOctaves="2" seed="4" />
        <feDisplacementMap in="SourceGraphic" scale="10" xChannelSelector="R" yChannelSelector="G" />
      </filter>
    </defs>
    <g filter="url(#coast)">
      {landWest.map((d) => <Land key={d} d={d} fill="#b0b0b0" />)}
      <path d={bordersWest} fill="none" stroke="#dfe1e3" strokeWidth="2" />
      <Land d={blackWest} fill="#000" />
      <g transform="translate(960 0)">
        {landEast.map((d) => <Land key={d} d={d} fill="#b0b0b0" />)}
        <path d={bordersEast} fill="none" stroke="#dfe1e3" strokeWidth="2" />
        <path d="M380,440L400,430 418,435 410,450 425,470 420,495 405,503 395,490 398,470 385,455ZM288,735L300,730 305,740 296,748 288,746Z" fill="#f4f6f8" />
        <path d="M278,758L285,782M303,795L308,820" stroke="#f4f6f8" strokeWidth="4" />
        {blackEast.map((d) => <Land key={d} d={d} fill="#000" />)}
        <Land d="M228,235L240,240 255,232 268,226 275,240 272,258 280,275 285,298 268,320 240,322 228,312 232,295 250,280 248,265 242,245Z" fill="#3b5549" />
        <Land d="M142,380L152,370 158,366 165,374 183,374 188,392 175,402 180,415 175,424 150,424 148,412 138,405Z" fill="#98cfad" />
      </g>
    </g>
  </MapSvg>
);

/* ---------- data ---------- */

const kinds = {
  Necessary: { solid: c.green, soft: "#e5edeb", ink: c.green },
  Functional: { solid: c.blue, soft: "#e6f4fe", ink: c.blue },
  Analytics: { solid: c.amber, soft: "#f9f2e8", ink: c.amber },
  Marketing: { solid: c.coral, soft: "#f8ebea", ink: c.coral },
};
type Kind = keyof typeof kinds;

const consents: { flag: FlagCode; given: Kind[]; devices: string[] }[] = [
  { flag: "nl", given: ["Necessary"], devices: ["windows", "desktop"] },
  { flag: "no", given: ["Necessary", "Analytics", "Marketing"], devices: ["edge", "apple", "desktop"] },
  { flag: "nl", given: ["Necessary"], devices: ["chrome", "windows", "phone"] },
  { flag: "no", given: ["Necessary", "Analytics"], devices: ["apple", "desktop"] },
  { flag: "se", given: ["Necessary"], devices: ["windows", "desktop"] },
];
const deviceIcons: Record<string, React.ReactNode> = {
  windows: <FaWindows size={12} />,
  apple: <FaApple size={12} />,
  chrome: <FaChrome size={12} />,
  edge: <FaEdgeLegacy size={12} />,
  desktop: <DesktopIcon size={12} />,
  phone: <PhoneIcon size={12} />,
};
const cookies = [
  { name: "_ga", vendor: "Google Analytics", kind: "Analytics", bg: c.coral, icon: c.coral },
  { name: "_gcl_au", vendor: "Google", kind: "Marketing", bg: c.coral, icon: c.coral },
  { name: "__cf_bm", vendor: "Cloudflare", kind: "Necessary", bg: c.green, icon: c.blue },
];
const countries: [FlagCode, string, number][] = [
  ["de", "Germany", 12],
  ["nl", "Netherlands", 11],
  ["us", "United States", 10],
  ["dk", "Denmark", 9],
];
const menu = [
  { label: "Dashboard", Icon: GridIcon },
  { label: "Domains", Icon: RowsIcon, active: true },
  { label: "Cookies", Icon: CookieIcon },
  { label: "Consents", Icon: ChecksIcon },
  { label: "Customize", Icon: WindowsIcon },
];
const pages = { used: 193, limit: 2500 };

const DailyStat = ({ title, value, color, bg, icon }: { title: string; value: string; color: string; bg: string; icon: React.ReactNode }) => (
  <StatCard>
    <Accent $color={color} />
    <StatTop>
      <div>
        <StatTitle>{title}</StatTitle>
        <StatValue $color={color}>{value}</StatValue>
      </div>
      <StatIcon $bg={bg} $color={color}>{icon}</StatIcon>
    </StatTop>
    <StatFoot>
      <span>Today</span>
      <Delta><TrendIcon size={12} />0.0%</Delta>
    </StatFoot>
  </StatCard>
);

export default function App() {
  return (
    <>
      <GlobalStyle />
      <Shell>
        <Rail aria-label="Sections">
          <LogoLink href="#" aria-label="Home"><Logo /></LogoLink>
          <RailList>
            <RailButton $active aria-label="Dashboard"><GridIcon size={21} /></RailButton>
            <RailButton aria-label="Users"><PeopleIcon size={20} /></RailButton>
            <RailButton aria-label="Data"><DatabaseIcon size={19} /></RailButton>
            <RailButton aria-label="Settings"><GearIcon size={19} /></RailButton>
          </RailList>
          <RailFoot>
            <RailButton aria-label="Dark mode"><MoonIcon size={21} /></RailButton>
            <RailButton aria-label="Log out"><LogoutIcon size={19} /></RailButton>
            <RailButton aria-label="Account"><AccountIcon size={20} /></RailButton>
          </RailFoot>
        </Rail>

        <Menu aria-label="Dashboard menu">
          <MenuTitle>Dashboard</MenuTitle>
          <MenuList>
            {menu.map(({ label, Icon, active }) => (
              <li key={label}>
                <MenuLink href="#" $active={active}><Icon size={20} />{label}</MenuLink>
              </li>
            ))}
          </MenuList>
        </Menu>

        <Main>
          <TopBar>
            <Burger aria-label="Toggle menu"><BurgerBar /><BurgerBar $short /><BurgerBar /></Burger>
            <SearchBox>
              <SearchInput type="text" placeholder="Search Domains" aria-label="Search Domains" />
              <SearchIcon size={12} />
            </SearchBox>
            <DomainIcon><RowsIcon size={20} /></DomainIcon>
            <SelectBox>
              <Select aria-label="Domain" defaultValue="site1">
                <option value="site1">seed2-site1.example.co...</option>
              </Select>
              <Caret />
            </SelectBox>
            <RoundButton aria-label="Full screen"><ExpandIcon size={14} /></RoundButton>
            <Avatar>RL</Avatar>
          </TopBar>

          <Content>
            <PageHead>
              <PageTitle>seed2-site1.example.com</PageTitle>
              <Crumbs>
                <li><CrumbLink href="#">Dashboard</CrumbLink></li>
                <li aria-hidden="true">»</li>
                <li><CrumbLink href="#">Domains</CrumbLink></li>
                <li aria-hidden="true">»</li>
                <li><CrumbHere>seed2-site1.example.com</CrumbHere></li>
              </Crumbs>
            </PageHead>

            <Grid>
              <Col $span={3}>
                <StatCard>
                  <Accent $color={c.green} />
                  <StatTop>
                    <div>
                      <StatTitle>Total pages</StatTitle>
                      <StatValue $color={c.green}>{pages.used}</StatValue>
                    </div>
                    <StatIcon $bg="#ebf0f0" $color={c.green}><FileIcon size={29} color={c.green} /></StatIcon>
                  </StatTop>
                  <Track>
                    <Fill style={{ width: `${(pages.used / pages.limit) * 100}%` }}>{pages.used} / {pages.limit}</Fill>
                  </Track>
                </StatCard>
                <DailyStat title="Total cookies" value="3" color={c.blue} bg="#eaf2fa" icon={<CookieIcon size={28} />} />
                <DailyStat title="Total consents" value="71" color={c.mint} bg="#ecf4f2" icon={<ChecksIcon size={28} />} />
              </Col>

              <Col $span={7}>
                <Card>
                  <CardHead><CardTitle>Consents by Region</CardTitle></CardHead>
                  <RegionBody>
                    <MapPane>
                      <WorldMap />
                      <ZoomStack>
                        <ZoomButton aria-label="Zoom in"><Line size={11} w={3.500}><path d="M12 2v20M2 12h20" /></Line></ZoomButton>
                        <ZoomButton aria-label="Zoom out"><Line size={11} w={3.500}><path d="M2 12h20" /></Line></ZoomButton>
                      </ZoomStack>
                      <Tooltip role="tooltip">
                        <TooltipName><Flag code="de" />Germany</TooltipName>
                        Consents: 12
                      </Tooltip>
                    </MapPane>
                    <CountryPane>
                      <CountryTable>
                        <thead><tr><Th>Country</Th><Th>Consent</Th></tr></thead>
                        <tbody>
                          {countries.map(([code, name, count]) => (
                            <Tr key={code}>
                              <Td><CountryName><Flag code={code} />{name}</CountryName></Td>
                              <Td>{count}</Td>
                            </Tr>
                          ))}
                        </tbody>
                      </CountryTable>
                    </CountryPane>
                  </RegionBody>
                </Card>
              </Col>

              <Col $span={2}>
                <DetailCard>
                  <Ribbon width="40" height="60" viewBox="0 0 40 60" aria-hidden="true">
                    <path d="M0 7.500V5q0-5 7-5v7.500z" fill="#c9872f" />
                    <path d="M7 0h24q9 0 9 9v41L23.500 60 7 50z" fill={c.amber} />
                    <g transform="translate(11.500 17)"><TrophyIcon size={26} color="#fff" /></g>
                  </Ribbon>
                  <dl>
                    <DetailLabel>DOMAIN DETAILS</DetailLabel>
                    <DetailName>seed2-site1.example.com</DetailName>
                    <DetailLabel>SUBSCRIPTION</DetailLabel>
                    <DetailValue $strong><TrophyIcon size={16} color={c.amber} />Premium250</DetailValue>
                    <DetailLabel>CREATED</DetailLabel>
                    <DetailValue>November 18, 2025</DetailValue>
                    <DetailLabel>LATEST SUCCESSFUL SCAN</DetailLabel>
                    <DetailValue>N/A</DetailValue>
                    <DetailLabel>LAST CONNECTED</DetailLabel>
                    <DetailValue>N/A</DetailValue>
                  </dl>
                </DetailCard>
              </Col>

              <Col $span={6}>
                <ListCard>
                  <CardHead $tall>
                    <CardTitle>Latest consents</CardTitle>
                    <ViewAll href="#">View all→</ViewAll>
                  </CardHead>
                  <ul>
                    {consents.map((row, i) => (
                      <Row key={i}>
                        <Disc><Flag code={row.flag} size={30} round /></Disc>
                        <RowText>
                          <RowTitle>November 18, 2025</RowTitle>
                          <Badges>
                            {(Object.keys(kinds) as Kind[]).map((kind) => {
                              const on = row.given.includes(kind);
                              return <Badge key={kind} $fg={on ? "#fff" : kinds[kind].ink} $bg={on ? kinds[kind].solid : kinds[kind].soft}>{kind}</Badge>;
                            })}
                          </Badges>
                        </RowText>
                        <RowEnd>
                          <Devices>{row.devices.map((d) => <span key={d}>{deviceIcons[d]}</span>)}</Devices>
                          <PathTag><GlobeIcon size={10} />/</PathTag>
                        </RowEnd>
                      </Row>
                    ))}
                  </ul>
                </ListCard>
              </Col>

              <Col $span={6}>
                <ListCard>
                  <CardHead $tall>
                    <CardTitle>Latest cookies</CardTitle>
                    <ViewAll href="#">View all→</ViewAll>
                  </CardHead>
                  <ul>
                    {cookies.map((row) => (
                      <Row key={row.name}>
                        <Disc><DatabaseIcon size={23} color={row.icon} /></Disc>
                        <RowText>
                          <RowTitle>{row.name}</RowTitle>
                          <RowMeta>November 18, 2025<PersonIcon size={11} /></RowMeta>
                        </RowText>
                        <RowEnd>
                          <RowTitle>{row.vendor}</RowTitle>
                          <Badge $fg="#fff" $bg={row.bg}>{row.kind}</Badge>
                        </RowEnd>
                      </Row>
                    ))}
                  </ul>
                </ListCard>
              </Col>
            </Grid>
          </Content>
        </Main>
      </Shell>
      <ToTop aria-label="Back to top"><Line size={14}><path d="M12 23V3M4 11l8-8 8 8" /></Line></ToTop>
    </>
  );
}
